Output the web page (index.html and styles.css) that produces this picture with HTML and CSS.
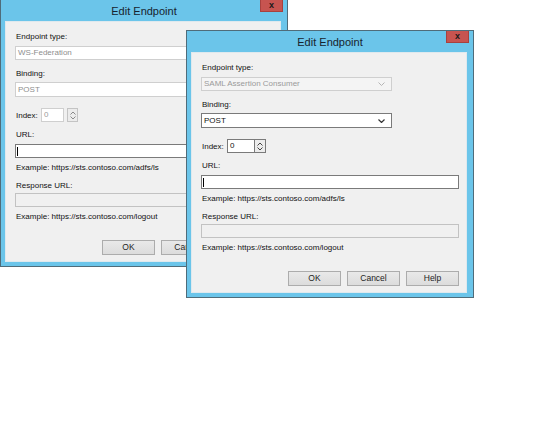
FILE: index.html
```html
<!DOCTYPE html>
<html>
<head>
<meta charset="utf-8">
<link rel="stylesheet" href="styles.css">
</head>
<body>
<div class="desktop">

  <div class="dialog dialog-back">
    <div class="titlebar">
      <span class="title">Edit Endpoint</span>
      <span class="close">x</span>
    </div>
    <div class="client">
      <div class="label">Endpoint type:</div>
      <div class="field disabled wide-combo"><span>WS-Federation</span></div>
      <div class="label gap-label">Binding:</div>
      <div class="field disabled wide-combo tight"><span>POST</span></div>
      <div class="index-row">
        <span class="index-label">Index:</span>
        <div class="spin-text disabled-spin"><span>0</span></div>
        <div class="spin-btns sep">
          <svg width="6" height="4" viewBox="0 0 6 4"><path d="M0.5 3.5 L3 1 L5.5 3.5" fill="none" stroke="#8a8a8a" stroke-width="1"/></svg>
          <svg width="6" height="4" viewBox="0 0 6 4"><path d="M0.5 0.5 L3 3 L5.5 0.5" fill="none" stroke="#8a8a8a" stroke-width="1"/></svg>
        </div>
      </div>
      <div class="label url-label">URL:</div>
      <div class="field input url-input"><span class="caret"></span></div>
      <div class="label example">Example: https://sts.contoso.com/adfs/ls</div>
      <div class="label resp-label">Response URL:</div>
      <div class="field disabled-input resp-input"></div>
      <div class="label example">Example: https://sts.contoso.com/logout</div>
      <div class="buttons">
        <div class="btn">OK</div>
        <div class="btn">Cancel</div>
        <div class="btn"></div>
      </div>
    </div>
  </div>

  <div class="dialog dialog-front">
    <div class="titlebar">
      <span class="title">Edit Endpoint</span>
      <span class="close">x</span>
    </div>
    <div class="client">
      <div class="label">Endpoint type:</div>
      <div class="field combo combo-disabled">
        <span>SAML Assertion Consumer</span>
        <svg class="chev" width="7" height="4" viewBox="0 0 7 4"><path d="M0.5 0.5 L3.5 3.5 L6.5 0.5" fill="none" stroke="#b5b5b5" stroke-width="1"/></svg>
      </div>
      <div class="label gap-label">Binding:</div>
      <div class="field combo combo-enabled tight">
        <span>POST</span>
        <svg class="chev" width="7" height="4" viewBox="0 0 7 4"><path d="M0.5 0.5 L3.5 3.5 L6.5 0.5" fill="none" stroke="#333" stroke-width="1.2"/></svg>
      </div>
      <div class="index-row">
        <span class="index-label">Index:</span>
        <div class="spin-text"><span>0</span></div>
        <div class="spin-btns">
          <svg width="6" height="4" viewBox="0 0 6 4"><path d="M0.5 3.5 L3 1 L5.5 3.5" fill="none" stroke="#444" stroke-width="1"/></svg>
          <svg width="6" height="4" viewBox="0 0 6 4"><path d="M0.5 0.5 L3 3 L5.5 0.5" fill="none" stroke="#444" stroke-width="1"/></svg>
        </div>
      </div>
      <div class="label url-label">URL:</div>
      <div class="field input url-input"><span class="caret"></span></div>
      <div class="label example">Example: https://sts.contoso.com/adfs/ls</div>
      <div class="label resp-label">Response URL:</div>
      <div class="field disabled-input resp-input"></div>
      <div class="label example">Example: https://sts.contoso.com/logout</div>
      <div class="buttons">
        <div class="btn">OK</div>
        <div class="btn">Cancel</div>
        <div class="btn">Help</div>
      </div>
    </div>
  </div>

</div>
</body>
</html>
```
FILE: styles.css
```css
html, body {
  margin: 0;
  padding: 0;
  background: #ffffff;
}

.desktop {
  position: relative;
  width: 540px;
  height: 422px;
  overflow: hidden;
  font-family: "Liberation Sans", Arial, sans-serif;
}

.dialog {
  position: absolute;
  box-sizing: border-box;
  width: 288px;
  height: 268px;
  background: #6bc5ea;
  border: 1px solid #4f6c7a;
  padding: 0 6px 4px 4px;
  display: flex;
  flex-direction: column;
}

.dialog-back {
  left: 0;
  top: -1px;
}

.dialog-front {
  left: 186px;
  top: 30px;
}

.titlebar {
  height: 21px;
  display: flex;
  align-items: center;
  justify-content: center;
  flex: none;
}

.title {
  font-size: 11px;
  color: #17232e;
  padding-left: 2px;
}

.close {
  position: absolute;
  top: 0;
  right: 4px;
  width: 23px;
  height: 12px;
  box-sizing: border-box;
  background: #c75450;
  border: 1px solid #a8413e;
  border-top: none;
  color: #1a1a1a;
  font-size: 9px;
  font-weight: bold;
  line-height: 10px;
  text-align: center;
}

.client {
  flex: 1;
  background: #f0f0f0;
  border: 1px solid #dfe9ee;
  box-sizing: border-box;
  padding: 10px 7px 0 9px;
  display: flex;
  flex-direction: column;
}

.label {
  font-size: 8px;
  line-height: 10px;
  height: 10px;
  color: #111111;
  padding-left: 1px;
  white-space: nowrap;
}

.gap-label { margin-top: 9px; }
.url-label { margin-top: 8px; }
.resp-label { margin-top: 8px; }
.example { margin-top: 5px; }

.field {
  box-sizing: border-box;
  height: 14px;
  margin-top: 4px;
  font-size: 8px;
  line-height: 12px;
  padding-left: 2px;
  white-space: nowrap;
  position: relative;
}

.field.tight { margin-top: 3px; height: 15px; line-height: 13px; }

.combo {
  width: 191px;
  display: flex;
  align-items: center;
  justify-content: space-between;
  padding-right: 6px;
}

.combo-disabled {
  background: #f4f4f4;
  border: 1px solid #cfcfcf;
  color: #9a9a9a;
}

.combo-enabled {
  background: #ffffff;
  border: 1px solid #7a7a7a;
  color: #111;
}

.wide-combo {
  width: 258px;
  background: #ffffff;
  border: 1px solid #cfcfcf;
  color: #8e8e8e;
}

.input {
  width: 258px;
  background: #ffffff;
  border: 1px solid #7a7a7a;
}

.url-input { margin-top: 4px; }

.caret {
  display: block;
  position: absolute;
  left: 1px;
  top: 2px;
  width: 1px;
  height: 9px;
  background: #000;
}

.disabled-input {
  width: 258px;
  background: #f0f0f0;
  border: 1px solid #c2c2c2;
}

.resp-input { margin-top: 2px; }

.index-row {
  display: flex;
  align-items: center;
  height: 14px;
  margin-top: 11px;
}

.index-label {
  font-size: 8px;
  color: #111111;
  width: 26px;
  padding-left: 1px;
  box-sizing: border-box;
  padding-top: 1px;
}

.spin-text {
  box-sizing: border-box;
  width: 27px;
  height: 14px;
  background: #ffffff;
  border: 1px solid #7a7a7a;
  border-right: none;
  font-size: 8px;
  line-height: 12px;
  padding-left: 2px;
  color: #111;
}

.disabled-spin {
  border: 1px solid #cfcfcf;
  width: 23px;
  color: #9a9a9a;
}

.spin-btns {
  box-sizing: border-box;
  width: 12px;
  height: 14px;
  border: 1px solid #7a7a7a;
  background: #ececec;
  display: flex;
  flex-direction: column;
  align-items: center;
  justify-content: space-around;
  padding: 1px 0;
}

.spin-btns.sep {
  margin-left: 3px;
  width: 11px;
  border-color: #c4c4c4;
}

.buttons {
  display: flex;
  justify-content: flex-end;
  gap: 6px;
  margin-top: 18px;
}

.btn {
  box-sizing: border-box;
  width: 53px;
  height: 15px;
  background: linear-gradient(#e9e9e9, #dcdcdc);
  border: 1px solid #acacac;
  font-size: 8.5px;
  line-height: 13px;
  text-align: center;
  color: #1e1e1e;
}
```
